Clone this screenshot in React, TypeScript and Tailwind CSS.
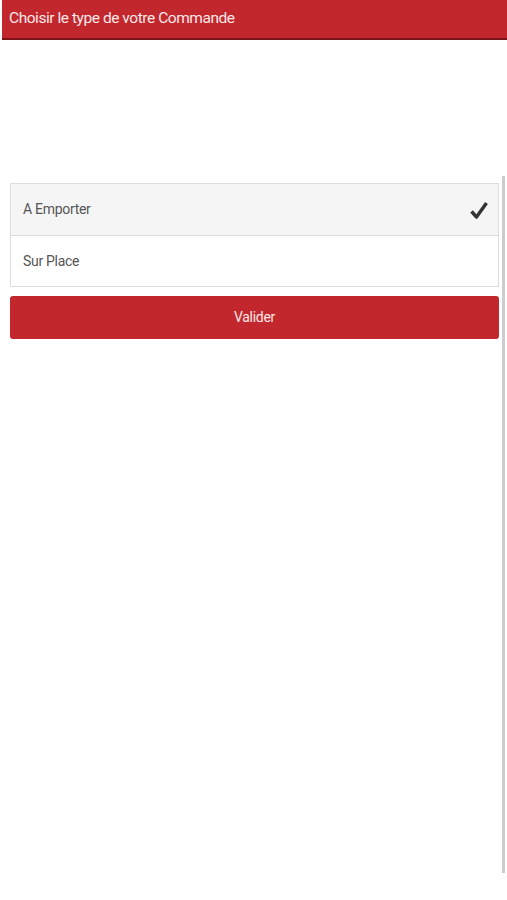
import { useState } from 'react';

const OPTIONS = ['A Emporter', 'Sur Place'];

export default function App() {
  const [selected, setSelected] = useState('A Emporter');

  return (
    <div className="relative h-[900px] w-[507px] overflow-hidden bg-white font-['Roboto',sans-serif]">
      <header className="ml-[2px] flex h-[40px] items-center border-b-2 border-[#7a1418] bg-[#c1272d] pl-[7px]">
        <h1 className="text-[15.5px] font-normal tracking-[-0.45px] text-[#fde8e8]">Choisir le type de votre Commande</h1>
      </header>

      <main className="flex gap-[3px] pl-[10px] pt-[136px]">
        <div className="w-[489px] pt-[7px]">
          <ul className="border border-[#dddddd]">
            {OPTIONS.map((opt, i) => (
              <li
                key={opt}
                onClick={() => setSelected(opt)}
                className={
                  'flex h-[51px] cursor-pointer items-center justify-between pl-[12px] pr-[10px] text-[14px] tracking-[-0.3px] text-[#555555] ' +
                  (i > 0 ? 'border-t border-[#dddddd] ' : '') +
                  (selected === opt ? 'bg-[#f5f5f5]' : 'bg-white')
                }
              >
                <span>{opt}</span>
                {selected === opt && (
                  <svg width="18" height="19" viewBox="0 0 18 19" className="mt-[2px]">
                    <path d="M1.5 10.5 L6.5 16 L16.5 2" fill="none" stroke="#333333" strokeWidth="3.4" strokeLinejoin="round" />
                  </svg>
                )}
              </li>
            ))}
          </ul>
          <button
            type="button"
            className="mt-[9px] h-[43px] w-full rounded-[3px] bg-[#c1272d] text-[14px] tracking-[-0.3px] text-[#fde8e8]"
          >
            Valider
          </button>
        </div>
        <div className="h-[697px] w-[3px] bg-[#cccccc]" />
      </main>
    </div>
  );
}
